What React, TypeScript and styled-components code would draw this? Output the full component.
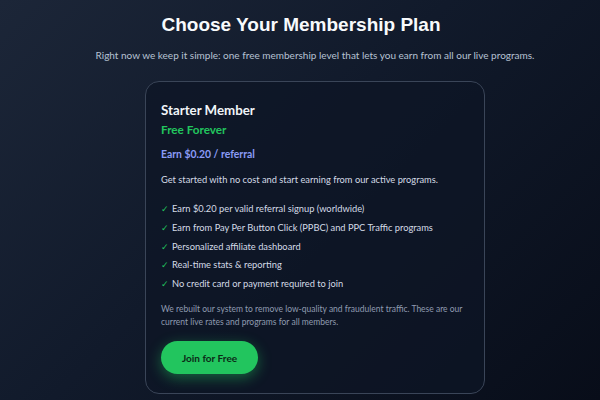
import React from "react";
import styled, { createGlobalStyle } from "styled-components";

const Global = createGlobalStyle`
  html, body { margin: 0; padding: 0; }
  body {
    width: 600px; height: 400px; overflow: hidden;
    background: linear-gradient(135deg, #1c2638 0%, #111a2b 45%, #080d19 100%);
    font-family: Lato, "Open Sans", sans-serif;
    color: #e2e8f0;
  }
`;

const Page = styled.main`
  display: flex;
  flex-direction: column;
  align-items: center;
  padding: 12px 0 0 30px;
`;

const Title = styled.h1`
  margin: 0 28px 0 0;
  font-family: "Liberation Sans", Arial, sans-serif;
  font-size: 19px;
  font-weight: 700;
  color: #f8fafc;
  line-height: 26px;
`;

const Subtitle = styled.p`
  margin: 9px 0 0;
  font-size: 10px;
  color: #b6c2d3;
  line-height: 16px;
  white-space: nowrap;
`;

const Card = styled.section`
  margin-top: 18px;
  width: 340px;
  box-sizing: border-box;
  padding: 19px 15px 19px;
  border: 1px solid #3a4558;
  border-radius: 14px;
  background: rgba(14, 21, 38, 0.75);
  display: flex;
  flex-direction: column;
  align-items: flex-start;
`;

const PlanName = styled.h2`
  margin: 0;
  font-size: 13.3px;
  font-weight: 700;
  color: #f1f5f9;
  line-height: 18px;
`;

const Price = styled.div`
  margin-top: 2px;
  font-size: 11.7px;
  font-weight: 700;
  color: #22c55e;
  line-height: 16px;
`;

const Rate = styled.div`
  margin-top: 10px;
  font-size: 10.4px;
  font-weight: 700;
  color: #8b9cf7;
  line-height: 14px;
`;

const Desc = styled.p`
  margin: 12px 0 0;
  font-size: 9.3px;
  color: #d4dbe6;
  line-height: 14px;
  white-space: nowrap;
`;

const List = styled.ul`
  list-style: none;
  margin: 15px 0 0;
  padding: 0;
  display: flex;
  flex-direction: column;
  gap: 4.75px;
`;

const Item = styled.li`
  display: flex;
  align-items: center;
  gap: 5px;
  font-size: 9.3px;
  color: #d4dbe6;
  line-height: 14px;
  white-space: nowrap;
`;

const Check = styled.span`
  color: #22c55e;
  font-size: 9px;
  width: 6px;
`;

const Note = styled.p`
  margin: 11.5px 0 0;
  font-size: 8.5px;
  color: #8f9bb0;
  line-height: 13px;
`;

const Button = styled.button`
  margin-top: 12.5px;
  width: 97px;
  height: 33px;
  border: none;
  border-radius: 999px;
  background: #22c55e;
  color: #0b2a16;
  font-family: Lato, "Open Sans", sans-serif;
  font-size: 10px;
  font-weight: 700;
  box-shadow: 0 4px 14px rgba(34, 197, 94, 0.45);
`;

const features = [
  "Earn $0.20 per valid referral signup (worldwide)",
  "Earn from Pay Per Button Click (PPBC) and PPC Traffic programs",
  "Personalized affiliate dashboard",
  "Real-time stats & reporting",
  "No credit card or payment required to join",
];

export default function App() {
  return (
    <>
      <Global />
      <Page>
        <Title>Choose Your Membership Plan</Title>
        <Subtitle>
          Right now we keep it simple: one free membership level that lets you earn from all our live programs.
        </Subtitle>
        <Card>
          <PlanName>Starter Member</PlanName>
          <Price>Free Forever</Price>
          <Rate>Earn $0.20 / referral</Rate>
          <Desc>Get started with no cost and start earning from our active programs.</Desc>
          <List>
            {features.map((f) => (
              <Item key={f}>
                <Check>✓</Check>
                {f}
              </Item>
            ))}
          </List>
          <Note>
            We rebuilt our system to remove low-quality and fraudulent traffic. These are our current live rates and programs for all members.
          </Note>
          <Button>Join for Free</Button>
        </Card>
      </Page>
    </>
  );
}
